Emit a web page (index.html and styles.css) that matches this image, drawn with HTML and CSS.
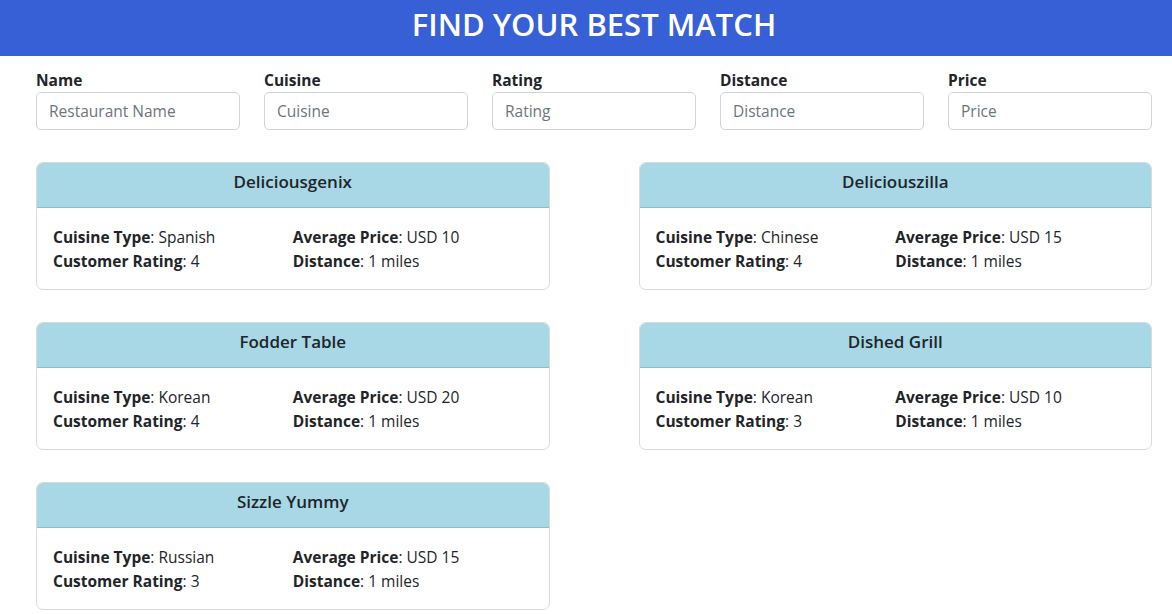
FILE: index.html
```html
<!DOCTYPE html>
<html lang="en">
<head>
<meta charset="utf-8">
<title>Find Your Best Match</title>
<link rel="stylesheet" href="styles.css">
</head>
<body>
<header class="topbar">
  <h1 class="topbar-title">FIND YOUR BEST MATCH</h1>
</header>
<main class="page">
  <form class="filters">
    <label class="field"><span class="field-label">Name</span><input class="field-input" type="text" placeholder="Restaurant Name"></label>
    <label class="field"><span class="field-label">Cuisine</span><input class="field-input" type="text" placeholder="Cuisine"></label>
    <label class="field"><span class="field-label">Rating</span><input class="field-input" type="text" placeholder="Rating"></label>
    <label class="field"><span class="field-label">Distance</span><input class="field-input" type="text" placeholder="Distance"></label>
    <label class="field"><span class="field-label">Price</span><input class="field-input" type="text" placeholder="Price"></label>
  </form>
  <section class="cards">
    <article class="card">
      <h2 class="card-title">Deliciousgenix</h2>
      <div class="card-body">
        <div><b>Cuisine Type</b>: Spanish</div>
        <div><b>Average Price</b>: USD 10</div>
        <div><b>Customer Rating</b>: 4</div>
        <div><b>Distance</b>: 1 miles</div>
      </div>
    </article>
    <article class="card">
      <h2 class="card-title">Deliciouszilla</h2>
      <div class="card-body">
        <div><b>Cuisine Type</b>: Chinese</div>
        <div><b>Average Price</b>: USD 15</div>
        <div><b>Customer Rating</b>: 4</div>
        <div><b>Distance</b>: 1 miles</div>
      </div>
    </article>
    <article class="card">
      <h2 class="card-title">Fodder Table</h2>
      <div class="card-body">
        <div><b>Cuisine Type</b>: Korean</div>
        <div><b>Average Price</b>: USD 20</div>
        <div><b>Customer Rating</b>: 4</div>
        <div><b>Distance</b>: 1 miles</div>
      </div>
    </article>
    <article class="card">
      <h2 class="card-title">Dished Grill</h2>
      <div class="card-body">
        <div><b>Cuisine Type</b>: Korean</div>
        <div><b>Average Price</b>: USD 10</div>
        <div><b>Customer Rating</b>: 3</div>
        <div><b>Distance</b>: 1 miles</div>
      </div>
    </article>
    <article class="card">
      <h2 class="card-title">Sizzle Yummy</h2>
      <div class="card-body">
        <div><b>Cuisine Type</b>: Russian</div>
        <div><b>Average Price</b>: USD 15</div>
        <div><b>Customer Rating</b>: 3</div>
        <div><b>Distance</b>: 1 miles</div>
      </div>
    </article>
  </section>
</main>
</body>
</html>
```
FILE: styles.css
```css
* { box-sizing: border-box; }

html, body {
  margin: 0;
  padding: 0;
  background: #ffffff;
}

body {
  font-family: "Open Sans", "Noto Sans", "Liberation Sans", sans-serif;
  font-size: 15.5px;
  line-height: 24px;
  color: #212529;
}

.topbar {
  background: #375fd6;
  height: 56px;
  display: flex;
  align-items: flex-start;
  padding-left: 36px;
  padding-top: 5px;
}

.topbar-title {
  width: 1116px;
  margin: 0;
  text-align: center;
  color: #ffffff;
  font-size: 31px;
  font-weight: 600;
  line-height: 38px;
}

.page {
  width: 1116px;
  margin-left: 36px;
  padding-top: 12px;
}

.filters {
  display: grid;
  grid-template-columns: repeat(5, minmax(0, 1fr));
  column-gap: 24px;
  margin: 0;
}

.field {
  display: flex;
  flex-direction: column;
  min-width: 0;
}

.field-label {
  font-weight: 700;
  line-height: 24px;
}

.field-input {
  width: 100%;
  min-width: 0;
  height: 38px;
  border: 1px solid #ced4da;
  border-radius: 5px;
  padding: 0 12px;
  font-family: inherit;
  font-size: 15.5px;
  color: #212529;
  background: #ffffff;
}

.field-input::placeholder {
  color: #6c757d;
}

.cards {
  margin-top: 32px;
  display: grid;
  grid-template-columns: minmax(0, 1fr) minmax(0, 1fr);
  column-gap: 89px;
  row-gap: 32px;
}

.card {
  height: 128px;
  border: 1px solid #dadada;
  border-radius: 7px;
  overflow: hidden;
  background: #ffffff;
}

.card-title {
  margin: 0;
  height: 45px;
  background: #a8d8e6;
  border-bottom: 1px solid #8fbccb;
  text-align: center;
  font-size: 17px;
  font-weight: 600;
  line-height: 37px;
}

.card-body {
  display: grid;
  grid-template-columns: 1fr 1fr;
  padding: 17px 16px 15px;
}

.card-body b {
  font-weight: 700;
}
```
